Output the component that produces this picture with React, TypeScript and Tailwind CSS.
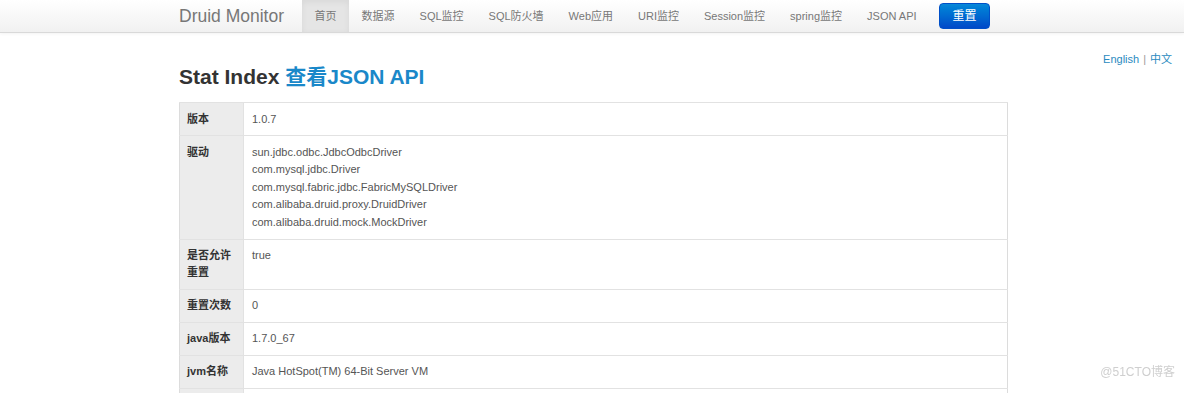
import React from 'react';

const navItems = ['首页', '数据源', 'SQL监控', 'SQL防火墙', 'Web应用', 'URI监控', 'Session监控', 'spring监控', 'JSON API'];

const rows: { label: string; values: string[]; dense?: boolean }[] = [
  { label: '版本', values: ['1.0.7'] },
  {
    label: '驱动',
    values: [
      'sun.jdbc.odbc.JdbcOdbcDriver',
      'com.mysql.jdbc.Driver',
      'com.mysql.fabric.jdbc.FabricMySQLDriver',
      'com.alibaba.druid.proxy.DruidDriver',
      'com.alibaba.druid.mock.MockDriver',
    ],
    dense: true,
  },
  { label: '是否允许重置', values: ['true'] },
  { label: '重置次数', values: ['0'] },
  { label: 'java版本', values: ['1.7.0_67'] },
  { label: 'jvm名称', values: ['Java HotSpot(TM) 64-Bit Server VM'] },
];

function NavBar() {
  return (
    <div className="h-[33px] border-b border-[#d9d9d9] bg-gradient-to-b from-white to-[#f1f1f1] shadow-[0_1px_3px_rgba(0,0,0,0.05)]">
      <div className="ml-[179px] flex h-[32px] w-[829px] items-center">
        <span className="mr-[18px] text-[17.5px] text-[#777]">Druid Monitor</span>
        {navItems.map((item, i) => (
          <span
            key={item}
            className={`flex h-[32px] items-center px-[12.5px] text-[11px] text-[#777] ${
              i === 0 ? 'bg-[#e5e5e5] shadow-[inset_0_2px_6px_rgba(0,0,0,0.06)]' : ''
            }`}
          >
            {item}
          </span>
        ))}
        <button className="ml-[10px] flex h-[26px] w-[51px] items-center justify-center rounded-[4px] border border-[#0050c8] bg-gradient-to-b from-[#0a88d8] to-[#0048c8] text-[12px] text-white">
          重置
        </button>
      </div>
    </div>
  );
}

export default function App() {
  return (
    <div className="min-h-[393px] bg-white font-['Liberation_Sans','Noto_Sans_CJK_SC',sans-serif]">
      <NavBar />
      <div className="flex justify-end pr-[12px] pt-[18px] text-[11px] leading-[16px]">
        <span className="text-[#2a8ac0]">English</span>
        <span className="mx-[4px] text-[#999]">|</span>
        <span className="text-[#2a8ac0]">中文</span>
      </div>
      <div className="ml-[179px] w-[829px]">
        <h1 className="mb-[15px] text-[21px] font-bold leading-[20px] text-[#333]">
          Stat Index <span className="text-[#1a88c9]">查看JSON API</span>
        </h1>
        <table className="w-full border-collapse border border-[#dcdcdc] text-[11px]">
          <tbody>
            {rows.map((row) => (
              <tr key={row.label} className="border-t border-[#e2e2e2]">
                <td className="w-[64px] bg-[#ececec] px-[7px] py-[7.5px] align-top font-bold leading-[17px] text-[#333]">
                  {row.label}
                </td>
                <td
                  className={`border-l border-[#e2e2e2] px-[8px] py-[7.5px] align-top text-[#555] ${
                    row.dense ? 'leading-[17.5px]' : 'leading-[17px]'
                  }`}
                >
                  {row.values.map((v) => (
                    <div key={v}>{v}</div>
                  ))}
                </td>
              </tr>
            ))}
            <tr className="h-[32px] border-t border-[#e2e2e2]">
              <td className="w-[64px] bg-[#ececec]" />
              <td className="border-l border-[#e2e2e2]" />
            </tr>
          </tbody>
        </table>
      </div>
      <div className="fixed bottom-[12px] right-[9px] text-[12px] text-[#cfcfcf]">@51CTO博客</div>
    </div>
  );
}
